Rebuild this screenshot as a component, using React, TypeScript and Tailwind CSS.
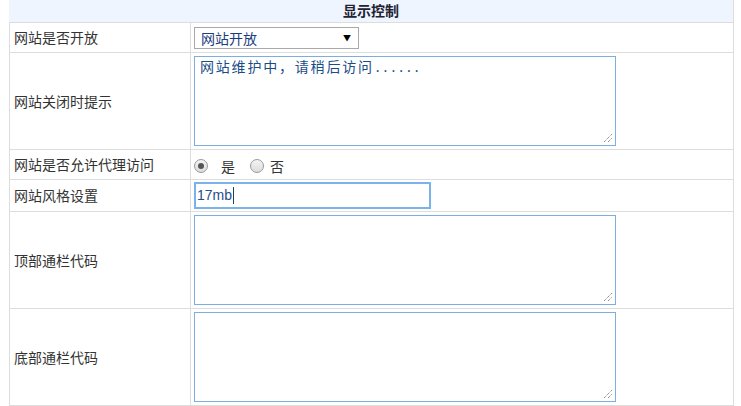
import React from "react";

const labelFont = "font-['Noto_Sans_CJK_SC','Noto_Sans',sans-serif]";

function Row({ label, h, children }: { label: string; h: string; children: React.ReactNode }) {
  return (
    <div className={`grid grid-cols-[181px_1fr] border-b border-[#dddddd] ${h}`}>
      <div className={`flex items-center border-r border-[#dddddd] pl-[4px] text-[14px] text-[#333333] ${labelFont}`}>
        {label}
      </div>
      <div className="flex items-center pl-[3px]">{children}</div>
    </div>
  );
}

function Resizer() {
  return (
    <svg className="absolute right-[2px] bottom-[2px]" width="10" height="10" viewBox="0 0 10 10">
      <line x1="1" y1="9" x2="9" y2="1" stroke="#666" strokeWidth="1" strokeDasharray="1 1" />
      <line x1="5" y1="9" x2="9" y2="5" stroke="#666" strokeWidth="1" strokeDasharray="1 1" />
    </svg>
  );
}

function Area({ cjk, tail }: { cjk?: string; tail?: string }) {
  return (
    <div className="relative h-[90px] w-[422px] border border-[#7eaee0] bg-white px-[5px] pt-[3px] font-['Liberation_Mono','Noto_Sans_CJK_SC',monospace] text-[13px] leading-[17px] text-[#1a4d88]">
      {cjk && <span className="text-[14px] tracking-[1.8px]">{cjk}</span>}
      {tail}
      <Resizer />
    </div>
  );
}

export default function App() {
  return (
    <div className="h-[406px] w-[741px] bg-white pl-[9px]">
      <div className="w-[725px] border-r border-[#dddddd]">
        <div className={`flex h-[23px] items-center justify-center border-b border-[#dddddd] bg-[#eef5fe] pb-[2px] text-[14px] font-bold text-[#222233] ${labelFont}`}>
          显示控制
        </div>
        <div className="border-l border-[#dddddd]">
          <Row label="网站是否开放" h="h-[30px]">
            <div className={`flex h-[22px] w-[165px] items-center justify-between border border-[#a9a9a9] bg-white pl-[6px] pr-[7px] text-[14px] text-[#1a3d7c] ${labelFont}`}>
              <span className="leading-none">网站开放</span>
              <span className="text-[8px] text-black">▼</span>
            </div>
          </Row>
          <Row label="网站关闭时提示" h="h-[97px]">
            <Area cjk="网站维护中，请稍后访问" tail="......" />
          </Row>
          <Row label="网站是否允许代理访问" h="h-[30px]">
            <div className={`mt-[3px] flex items-center text-[14px] text-[#333333] ${labelFont}`}>
              <span className="flex h-[14px] w-[14px] items-center justify-center rounded-full border border-[#9a9a9a] bg-gradient-to-b from-[#f4f4f4] to-[#dcdcdc]">
                <span className="h-[6px] w-[6px] rounded-full bg-[#555555]" />
              </span>
              <span className="ml-[13px]">是</span>
              <span className="ml-[15px] h-[14px] w-[14px] rounded-full border border-[#9a9a9a] bg-gradient-to-b from-[#f4f4f4] to-[#dcdcdc]" />
              <span className="ml-[6px]">否</span>
            </div>
          </Row>
          <Row label="网站风格设置" h="h-[32px]">
            <div className="flex h-[27px] w-[237px] items-center border-2 border-[#7ab3ec] bg-white pl-[1px] font-['Liberation_Sans',Arial,sans-serif] text-[14px] text-[#1f4e8c]">
              17mb
              <span className="ml-[1px] h-[17px] w-px bg-[#1f3f6f]" />
            </div>
          </Row>
          <Row label="顶部通栏代码" h="h-[97px]">
            <Area />
          </Row>
          <Row label="底部通栏代码" h="h-[97px]">
            <Area />
          </Row>
        </div>
      </div>
    </div>
  );
}
